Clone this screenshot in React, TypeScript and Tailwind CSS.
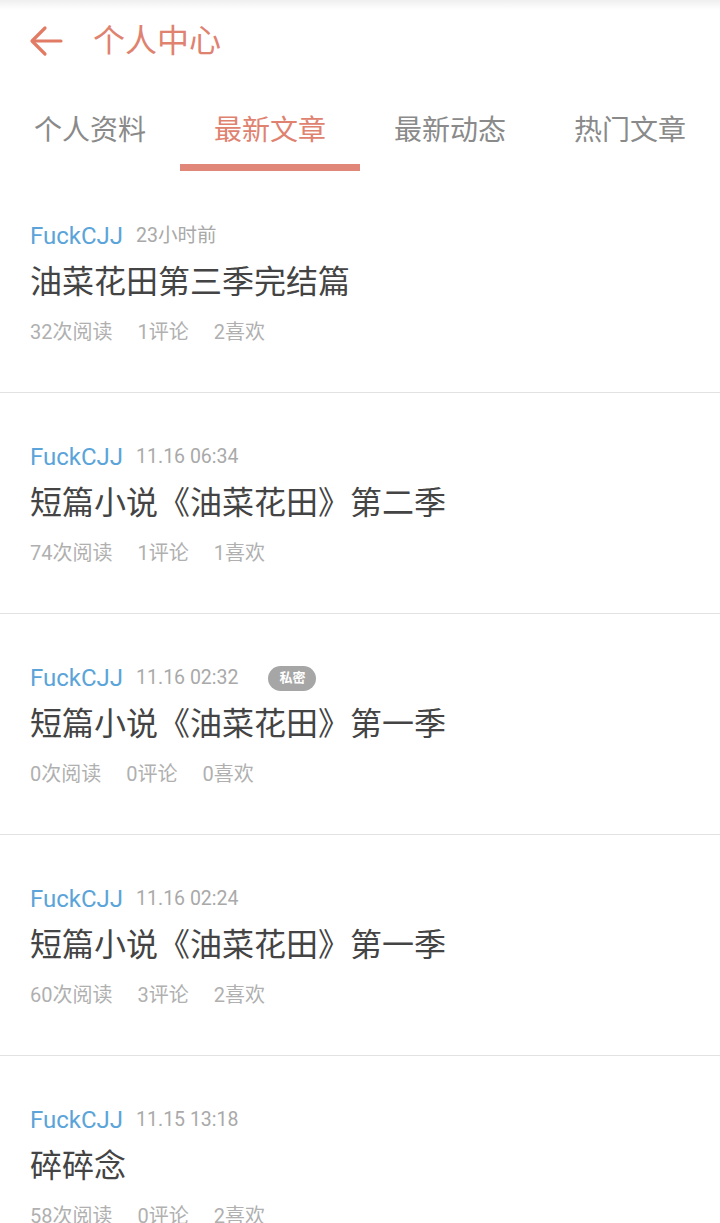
import React from "react";

type Article = {
  author: string;
  time: string;
  title: string;
  reads: number;
  comments: number;
  likes: number;
  isPrivate?: boolean;
};

const articles: Article[] = [
  { author: "FuckCJJ", time: "23小时前", title: "油菜花田第三季完结篇", reads: 32, comments: 1, likes: 2 },
  { author: "FuckCJJ", time: "11.16 06:34", title: "短篇小说《油菜花田》第二季", reads: 74, comments: 1, likes: 1 },
  { author: "FuckCJJ", time: "11.16 02:32", title: "短篇小说《油菜花田》第一季", reads: 0, comments: 0, likes: 0, isPrivate: true },
  { author: "FuckCJJ", time: "11.16 02:24", title: "短篇小说《油菜花田》第一季", reads: 60, comments: 3, likes: 2 },
  { author: "FuckCJJ", time: "11.15 13:18", title: "碎碎念", reads: 58, comments: 0, likes: 2 },
];

const tabs = ["个人资料", "最新文章", "最新动态", "热门文章"];
const font = { fontFamily: '"Roboto", "Noto Sans CJK SC", sans-serif' };

function ArticleRow({ article }: { article: Article }) {
  return (
    <div className="h-[221px] border-b border-[#e2e2e2] px-[30px] pt-[48px]">
      <div className="flex items-center h-[32px]">
        <span className="text-[24px] text-[#5ba4d9]">{article.author}</span>
        <span className="ml-[13px] text-[19.5px] text-[#a9a9a9]">{article.time}</span>
        {article.isPrivate && (
          <span className="ml-[30px] h-[25px] w-[48px] rounded-full bg-[#a6a6a6] text-white text-[13px] font-bold flex items-center justify-center">
            私密
          </span>
        )}
      </div>
      <div className="mt-[10px] h-[40px] flex items-center text-[32px] text-[#444444]">
        {article.title}
      </div>
      <div className="mt-[15px] flex items-center gap-[25px] text-[20px] text-[#b0b0b0]">
        <span>{article.reads}次阅读</span>
        <span>{article.comments}评论</span>
        <span>{article.likes}喜欢</span>
      </div>
    </div>
  );
}

export default function App() {
  return (
    <div className="w-[720px] h-[1223px] overflow-hidden bg-white" style={font}>
      <header className="h-[82px] bg-gradient-to-b from-[#efefef] via-white to-white from-0% via-[12%] flex items-center px-[28px]">
        <svg width="36" height="36" viewBox="0 0 36 36" fill="none" stroke="#e27b64" strokeWidth="3.2" strokeLinecap="round" strokeLinejoin="round">
          <path d="M33 18H5" />
          <path d="M17 5L4 18l13 13" />
        </svg>
        <span className="ml-[29px] text-[32px] text-[#e08270]">个人中心</span>
      </header>
      <nav className="h-[90px] flex flex-col">
        <div className="flex flex-1">
          {tabs.map((t, i) => (
            <div
              key={t}
              className={
                "w-[180px] flex items-center justify-center pt-[16px] text-[28px] " +
                (i === 1 ? "text-[#e08270]" : "text-[#8a8a8a]")
              }
            >
              {t}
            </div>
          ))}
        </div>
        <div className="h-[7px] mb-[1px] flex">
          <div className="w-[180px]" />
          <div className="w-[180px] bg-[#e0877a]" />
        </div>
      </nav>
      <main>
        {articles.map((a, i) => (
          <ArticleRow key={i} article={a} />
        ))}
      </main>
    </div>
  );
}
